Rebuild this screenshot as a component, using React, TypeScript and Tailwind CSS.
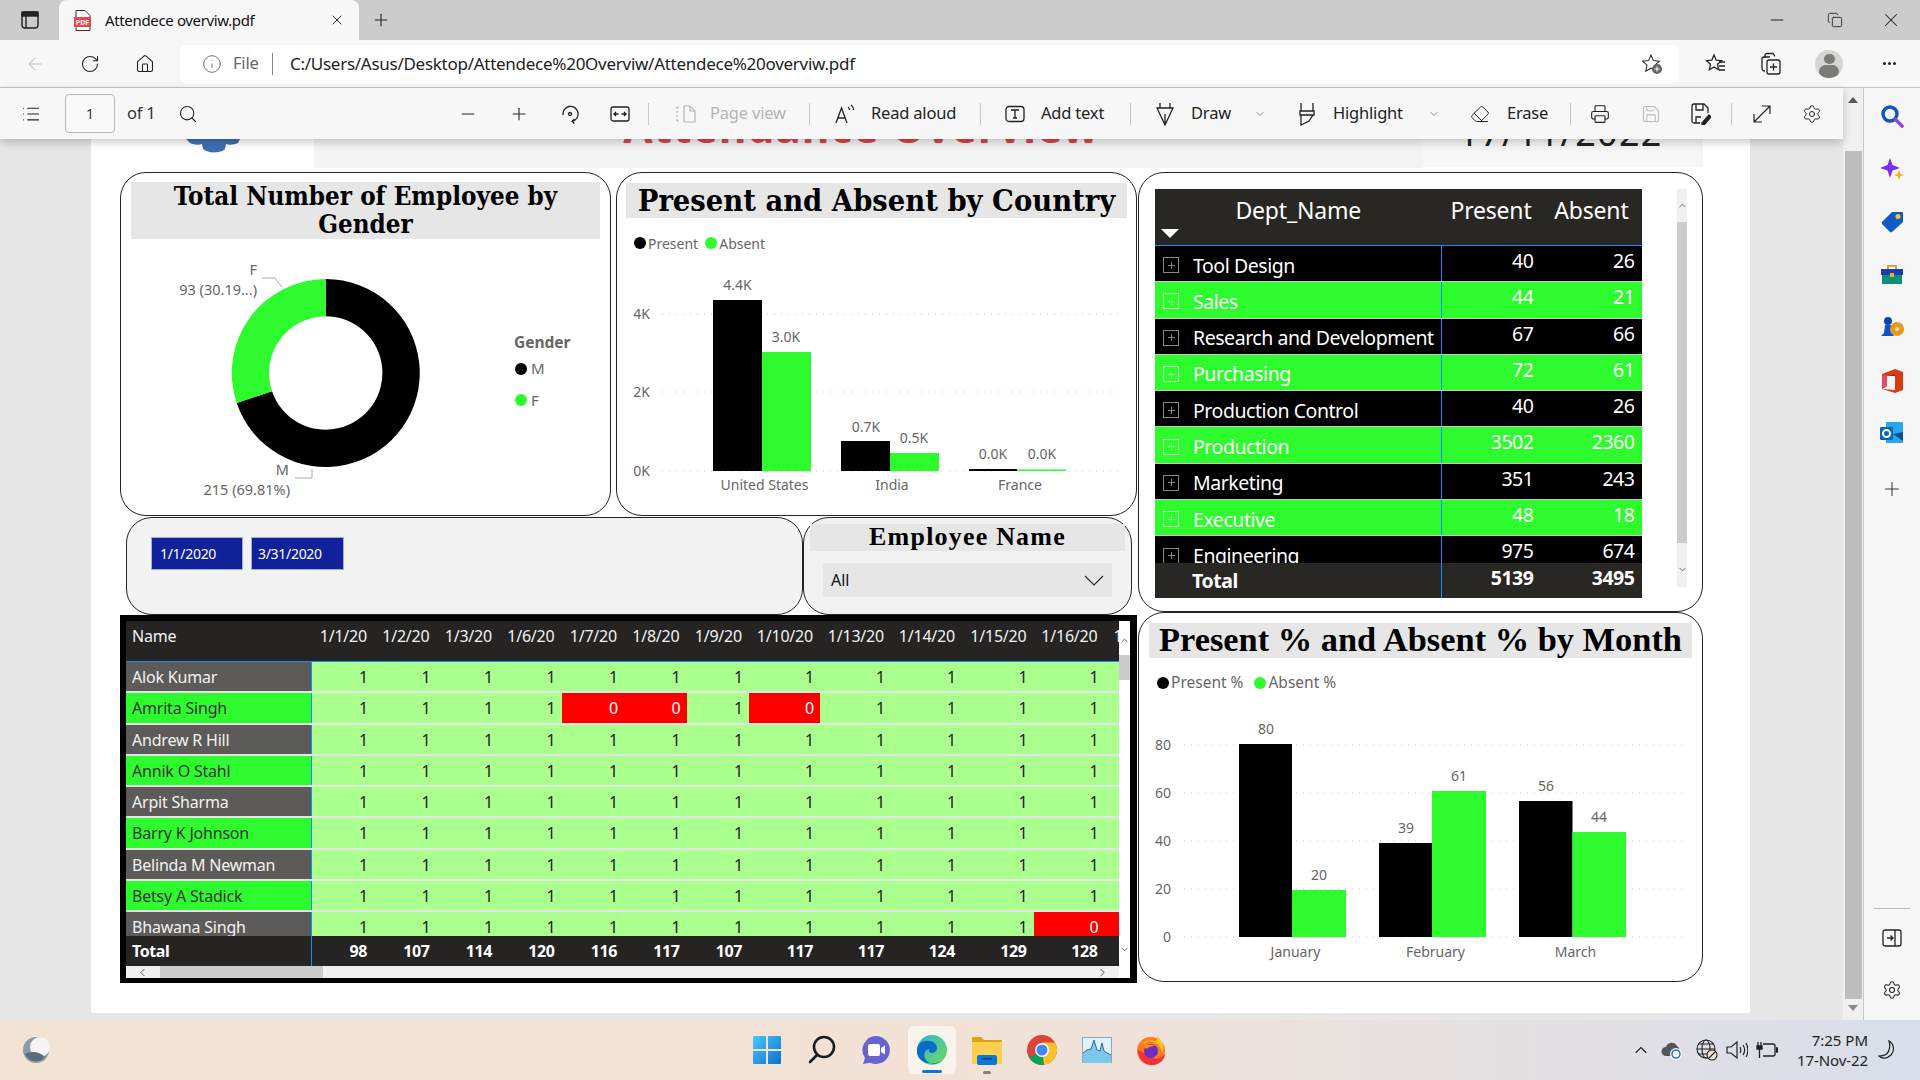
import React from "react";
import {
  ArrowLeft,
  ChevronDown,
  ChevronLeft,
  ChevronRight,
  ChevronUp,
  Copy,
  Eraser,
  Home,
  Info,
  List,
  Minus,
  Plus,
  Printer,
  RotateCw,
  Save,
  Search,
  Settings,
  X,
} from "lucide-react";

const GREEN = "#2dfb2d";

const depts = [
  ["Tool Design", "40", "26"],
  ["Sales", "44", "21"],
  ["Research and Development", "67", "66"],
  ["Purchasing", "72", "61"],
  ["Production Control", "40", "26"],
  ["Production", "3502", "2360"],
  ["Marketing", "351", "243"],
  ["Executive", "48", "18"],
  ["Engineering", "975", "674"],
];

const colWidths = [
  "w-[62.5px]",
  "w-[62.5px]",
  "w-[62.5px]",
  "w-[62.5px]",
  "w-[62.5px]",
  "w-[62.5px]",
  "w-[62.5px]",
  "w-[71px]",
  "w-[71px]",
  "w-[71px]",
  "w-[71.5px]",
  "w-[71px]",
];

const dates = ["1/1/20", "1/2/20", "1/3/20", "1/6/20", "1/7/20", "1/8/20", "1/9/20", "1/10/20", "1/13/20", "1/14/20", "1/15/20", "1/16/20"];
const totals = ["98", "107", "114", "120", "116", "117", "107", "117", "117", "124", "129", "128"];

const people: [string, number[]][] = [
  ["Alok Kumar", []],
  ["Amrita Singh", [4, 5, 7]],
  ["Andrew R Hill", []],
  ["Annik O Stahl", []],
  ["Arpit Sharma", []],
  ["Barry K Johnson", []],
  ["Belinda M Newman", []],
  ["Betsy A Stadick", []],
  ["Bhawana Singh", [11]],
];

const Divider = ({ className = "" }: { className?: string }) => (
  <div className={`w-px h-[22px] bg-[#c8c8c8] shrink-0 ${className}`} />
);

const ToolText = ({ className, muted, children }: { className: string; muted?: boolean; children: React.ReactNode }) => (
  <span className={`shrink-0 whitespace-nowrap text-[16.5px] tracking-[-0.2px] ${muted ? "text-[#b5b5b5]" : "text-[#222]"} ${className}`}>
    {children}
  </span>
);

const TabStrip = () => (
  <div className="h-10 bg-[#cccccc] flex items-end shrink-0">
    <div className="ml-5 mb-[10px] w-5 h-5 flex items-center justify-center">
      <svg width="18" height="18" viewBox="0 0 18 18" fill="none" stroke="#222" strokeWidth="1.4">
        <rect x="1" y="1" width="16" height="16" rx="3" />
        <rect x="1" y="1" width="16" height="4" fill="#222" />
        <path d="M5 5v12" />
      </svg>
    </div>
    <div className="ml-[19px] w-[300px] h-10 bg-[#f7f7f7] rounded-t-lg flex items-center">
      <svg className="ml-[14px]" width="19" height="21" viewBox="0 0 19 21">
        <path d="M3 .5h9l5 5v15H3z" fill="#fff" stroke="#333" />
        <rect x="1" y="7" width="17" height="10" fill="#f0444a" />
        <text x="9.5" y="15" textAnchor="middle" fontSize="7" fontWeight="700" fill="#fff">PDF</text>
      </svg>
      <span className="ml-[13px] w-[224px] text-[15px] tracking-[-0.35px] text-[#111] whitespace-nowrap">Attendece overviw.pdf</span>
      <X size={16} strokeWidth={1.4} className="text-[#222]" />
    </div>
    <Plus size={20} strokeWidth={1.3} className="ml-3 mb-[10px] text-[#222]" />
    <div className="flex-1" />
    <Minus size={20} strokeWidth={1.3} className="mb-[10px] text-[#222]" />
    <Copy size={16} strokeWidth={1.3} className="ml-10 mb-3 text-[#222]" />
    <X size={22} strokeWidth={1.1} className="ml-[37px] mr-[18px] mb-[9px] text-[#222]" />
  </div>
);

const AddressBar = () => (
  <div className="h-12 bg-[#f7f7f7] flex items-center shrink-0 border-b border-[#c6c6c6]">
    <ArrowLeft size={20} strokeWidth={1.2} className="ml-[25px] text-[#b9b9b9]" />
    <RotateCw size={20} strokeWidth={1.3} className="ml-[35px] text-[#222]" />
    <Home size={20} strokeWidth={1.3} className="ml-[35px] text-[#222]" />
    <div className="ml-[25px] w-[1499px] h-[38px] bg-white rounded-md flex items-center">
      <Info size={20} strokeWidth={1.1} className="ml-[22px] text-[#666]" />
      <span className="ml-[11px] w-[29px] text-[16.5px] text-[#666] tracking-[-0.2px]">File</span>
      <div className="ml-[10px] w-px h-[22px] bg-[#888]" />
      <span className="ml-[17px] text-[17px] tracking-[-0.27px] text-[#222] whitespace-nowrap">
        C:/Users/Asus/Desktop/Attendece%20Overviw/Attendece%20overviw.pdf
      </span>
      <div className="flex-1" />
      <svg className="mr-[16px]" width="22" height="22" viewBox="0 0 22 22" fill="none" stroke="#333" strokeWidth="1.1">
        <path d="M10 2l2.5 5.6 5.9.6-4.4 4 1.2 5.9L10 15.2l-5.2 2.9L6 12.2l-4.4-4 5.9-.6z" />
        <circle cx="16" cy="16" r="5" fill="#666" stroke="none" />
        <path d="M16 13.5v5M13.5 16h5" stroke="#fff" />
      </svg>
    </div>
    <svg className="ml-[26px]" width="22" height="22" viewBox="0 0 22 22" fill="none" stroke="#222" strokeWidth="1.3">
      <path d="M9 2l2.2 5.2 5.3.5-4 3.6 1.2 5.4L9 13.9l-4.700 2.800 1.200-5.400-4-3.600 5.300-.5z" />
      <path d="M14 9h6M14 13h6M14 17h6" />
    </svg>
    <svg className="ml-[33px]" width="22" height="24" viewBox="0 0 22 24" fill="none" stroke="#222" strokeWidth="1.3">
      <path d="M5 5.500V3.500a2 2 0 0 1 2-2h6l2 3" />
      <path d="M5 19c-2 0-3-1-3-3V7a2 2 0 0 1 2-2h6" />
      <rect x="7" y="8" width="13" height="14" rx="2" />
      <path d="M13.500 11.500v7M10 15h7" />
    </svg>
    <div className="ml-[33px] w-[28px] h-[28px] rounded-full bg-[#d5d5d2] overflow-hidden flex flex-col items-center">
      <div className="mt-[4px] w-[11px] h-[12px] rounded-full bg-[#7b7b79]" />
      <div className="mt-[1px] w-[20px] h-[14px] rounded-full bg-[#7b7b79]" />
    </div>
    <div className="ml-[40px] flex gap-[2px]">
      <div className="w-[3px] h-[3px] rounded-full bg-[#222]" />
      <div className="w-[3px] h-[3px] rounded-full bg-[#222]" />
      <div className="w-[3px] h-[3px] rounded-full bg-[#222]" />
    </div>
  </div>
);

const PdfToolbar = () => (
  <div className="relative z-10 h-[51px] bg-[#f7f7f7] flex items-center shrink-0 shadow-[0_3px_9px_rgba(0,0,0,0.22)]">
    <List size={20} strokeWidth={1.3} className="ml-[21px] shrink-0 text-[#222]" />
    <div className="ml-[24px] w-[50px] h-[39px] shrink-0 border border-[#b8b8b8] rounded-sm bg-[#f9f9f9] flex items-center justify-center text-[14px] text-[#333]">1</div>
    <ToolText className="ml-[12px] w-[25px] text-[#333]">of 1</ToolText>
    <Search size={20} strokeWidth={1.3} className="ml-[26px] shrink-0 text-[#222]" />
    <Minus size={20} strokeWidth={1.3} className="ml-[260px] shrink-0 text-[#222]" />
    <Plus size={20} strokeWidth={1.3} className="ml-[31px] shrink-0 text-[#222]" />
    <svg className="ml-[31px] shrink-0" width="20" height="20" viewBox="0 0 20 20" fill="none" stroke="#222" strokeWidth="1.3">
      <path d="M3 11a7.500 7.500 0 0 1 6-8.500 7.500 7.500 0 1 1 3 15" />
      <path d="M14.500 15l-2.500 2.500 2.500 2" />
      <circle cx="10" cy="10" r="1.500" />
    </svg>
    <svg className="ml-[30px] shrink-0" width="20" height="20" viewBox="0 0 20 20" fill="none" stroke="#222" strokeWidth="1.3">
      <rect x="1" y="3" width="18" height="14" rx="2" />
      <path d="M4.500 10h4M11.500 10h4M6 8l-2 2 2 2M14 8l2 2-2 2" />
    </svg>
    <Divider className="ml-[18px]" />
    <svg className="ml-[27px] shrink-0" width="20" height="20" viewBox="0 0 20 20" fill="none" stroke="#b5b5b5" strokeWidth="1.2">
      <path d="M1 3h4M1 17h4M1 3v14" strokeDasharray="2 2" />
      <path d="M8 2h6l5 5v11H8z" />
      <path d="M14 2v5h5" />
    </svg>
    <ToolText muted className="ml-[14px] w-[76px]">Page view</ToolText>
    <Divider className="ml-[23px]" />
    <svg className="ml-[25px] shrink-0" width="20" height="20" viewBox="0 0 20 20" fill="none" stroke="#222" strokeWidth="1.3">
      <path d="M1 19L6.500 4 12 19M3 14h7" />
      <path d="M13 3c1 .7 1.500 1.700 1.500 3M16 1c1.500 1.200 2.500 3 2.500 5" />
    </svg>
    <ToolText className="ml-[16px] w-[86px]">Read aloud</ToolText>
    <Divider className="ml-[23px]" />
    <svg className="ml-[24px] shrink-0" width="20" height="20" viewBox="0 0 20 20" fill="none" stroke="#222" strokeWidth="1.3">
      <rect x="1" y="2.500" width="18" height="15" rx="3" />
      <path d="M6 6h8M10 6v8M8 14h4" />
    </svg>
    <ToolText className="ml-[16px] w-[65px]">Add text</ToolText>
    <Divider className="ml-[24px]" />
    <svg className="ml-[24px] shrink-0" width="20" height="24" viewBox="0 0 20 24" fill="none" stroke="#222" strokeWidth="1.3">
      <path d="M2 6h16l-8 17zM5 6V1M15 6V1M10 12v10" />
    </svg>
    <ToolText className="ml-[16px] w-[39px]">Draw</ToolText>
    <ChevronDown size={12} strokeWidth={1.2} className="ml-[24px] shrink-0 text-[#444]" />
    <svg className="ml-[31px] shrink-0" width="20" height="24" viewBox="0 0 20 24" fill="none" stroke="#222" strokeWidth="1.3">
      <path d="M4 1v8h12V1M3 9h14v4H3zM4 13v10l8-4 4-6" />
    </svg>
    <ToolText className="ml-[16px] w-[71px]">Highlight</ToolText>
    <ChevronDown size={12} strokeWidth={1.2} className="ml-[24px] shrink-0 text-[#444]" />
    <Eraser size={20} strokeWidth={1.2} className="ml-[30px] shrink-0 text-[#222]" />
    <ToolText className="ml-[17px] w-[40px]">Erase</ToolText>
    <Divider className="ml-[23px]" />
    <Printer size={20} strokeWidth={1.3} className="ml-[19px] shrink-0 text-[#222]" />
    <Save size={20} strokeWidth={1.3} className="ml-[31px] shrink-0 text-[#bbb]" />
    <svg className="ml-[30px] shrink-0" width="20" height="22" viewBox="0 0 20 22" fill="none" stroke="#222" strokeWidth="1.3">
      <path d="M9 20H3a2 2 0 0 1-2-2V3a2 2 0 0 1 2-2h10l4 4v5" />
      <path d="M5 1v6h7V1M5 20v-6h5" />
      <path d="M11 20l7-8 2 2-7 8h-2z" fill="#222" />
    </svg>
    <Divider className="ml-[20px]" />
    <svg className="ml-[20px] shrink-0" width="20" height="20" viewBox="0 0 20 20" fill="none" stroke="#222" strokeWidth="1.2">
      <path d="M2 18L18 2M10 2h8v8M2 10v8h8" />
    </svg>
    <Settings size={20} strokeWidth={1.2} className="ml-[30px] shrink-0 text-[#222]" />
  </div>
);

const ChartTitle = ({ className, children }: { className: string; children: React.ReactNode }) => (
  <div className={`bg-[#e6e6e6] text-center font-bold text-black ${className}`}>{children}</div>
);

const GenderPanel = () => (
  <div className="w-[491px] h-[344px] shrink-0 border border-[#252423] rounded-[26px] overflow-hidden bg-white">
    <ChartTitle className="mt-[9px] mx-[10px] h-[57px] text-[25.8px] leading-[28px] font-['DejaVu_Serif_Condensed','Liberation_Serif',serif]">Total Number of Employee by Gender</ChartTitle>
    <svg width="489" height="276" viewBox="121 239 489 276" className="block">
      <path d="M325.7 279A94 94 0 1 1 236.7 403.1L272 391.2A56.7 56.7 0 1 0 325.7 316.3Z" fill="#000" />
      <path d="M325.7 279A94 94 0 0 0 236.7 403.1L272 391.2A56.7 56.7 0 0 1 325.7 316.3Z" fill={GREEN} />
      <path d="M262 278h13l7 9M295 478h17v-9" fill="none" stroke="#aaa" />
      <g fontSize="14.5" fill="#666">
        <text x="257" y="275" textAnchor="end">F</text>
        <text x="257" y="295" textAnchor="end">93 (30.19...)</text>
        <text x="289" y="475" textAnchor="end">M</text>
        <text x="290" y="495" textAnchor="end">215 (69.81%)</text>
        <text x="514" y="348" fontWeight="700" fontSize="15.5">Gender</text>
        <text x="531" y="374" fontSize="15">M</text>
        <text x="531" y="406" fontSize="15">F</text>
      </g>
      <circle cx="521" cy="369" r="6" fill="#000" />
      <circle cx="521" cy="400" r="6" fill={GREEN} />
    </svg>
  </div>
);

const ChartLegend = ({ className, gap, items }: { className: string; gap: string; items: string[] }) => (
  <div className={`flex items-center text-[#666] ${className}`}>
    {items.map((item, i) => (
      <div key={item} className={`flex items-center gap-[2px] ${i === 1 ? gap : ""}`}>
        <span className={`w-3 h-3 rounded-full ${i === 0 ? "bg-black" : "bg-[#2dfb2d]"}`} />
        <span>{item}</span>
      </div>
    ))}
  </div>
);

const Grid = ({ x1, x2, ys }: { x1: number; x2: number; ys: number[] }) => (
  <g stroke="#c9c9c9" strokeDasharray="1 6">
    {ys.map((y) => (
      <line key={y} x1={x1} x2={x2} y1={y} y2={y} />
    ))}
  </g>
);

const CountryPanel = () => (
  <div className="w-[521px] h-[344px] shrink-0 border border-[#252423] rounded-[26px] overflow-hidden bg-white">
    <ChartTitle className="mt-[10px] mx-[9px] h-[35px] text-[30.5px] leading-[35px] font-['DejaVu_Serif_Condensed','Liberation_Serif',serif]">Present and Absent by Country</ChartTitle>
    <ChartLegend className="mt-[16px] ml-[17px] h-[18px] text-[14px]" gap="ml-[7px]" items={["Present", "Absent"]} />
    <svg width="519" height="232" viewBox="617 268 519 232" className="block mt-[16px]">
      <Grid x1={662} x2={1122} ys={[314, 392, 471]} />
      <rect x="713" y="300" width="49" height="171" fill="#000" />
      <rect x="762" y="352" width="49" height="119" fill={GREEN} />
      <rect x="841" y="441" width="49" height="30" fill="#000" />
      <rect x="890" y="453" width="49" height="18" fill={GREEN} />
      <rect x="969" y="469" width="48" height="2" fill="#000" />
      <rect x="1017" y="469.5" width="49" height="1.5" fill={GREEN} />
      <g fontSize="14" fill="#666" textAnchor="middle">
        <text x="737.5" y="290">4.4K</text>
        <text x="786" y="342">3.0K</text>
        <text x="866" y="432">0.7K</text>
        <text x="914" y="443">0.5K</text>
        <text x="993" y="459">0.0K</text>
        <text x="1042" y="459">0.0K</text>
        <text x="764.5" y="490">United States</text>
        <text x="892" y="490">India</text>
        <text x="1020" y="490">France</text>
      </g>
      <g fontSize="14" fill="#666" textAnchor="end">
        <text x="650" y="319">4K</text>
        <text x="650" y="397">2K</text>
        <text x="650" y="476">0K</text>
      </g>
    </svg>
  </div>
);

const DatePanel = () => (
  <div className="w-[677px] h-[98px] shrink-0 border border-[#252423] rounded-[26px] bg-[#f2f2f2] flex items-start gap-2 pl-[24px] pt-[19px]">
    <div className="w-[92px] h-[33px] bg-[#10219a] border border-[#9fb0d8] flex items-center pl-[8px] text-[14px] tracking-[-0.3px] text-white">1/1/2020</div>
    <div className="w-[93px] h-[33px] bg-[#10219a] border border-[#9fb0d8] flex items-center pl-[6px] text-[14px] tracking-[-0.3px] text-white">3/31/2020</div>
  </div>
);

const EmployeeSlicer = () => (
  <div className="w-[329px] h-[98px] shrink-0 border border-[#252423] rounded-[26px] bg-[#f2f2f2] px-[6px] pt-[6px]">
    <ChartTitle className="h-[27px] text-[26px] leading-[26px] tracking-[1.2px] font-['Liberation_Serif',serif]">Employee Name</ChartTitle>
    <div className="mt-[12px] mx-[13px] h-[34px] bg-[#e6e6e6] flex items-center justify-between pl-[8px] pr-[8px] text-[16px] text-[#111]">
      <span>All</span>
      <svg width="20" height="11" viewBox="0 0 20 11" fill="none" stroke="#222" strokeWidth="1.1">
        <path d="M1 1l9 9 9-9" />
      </svg>
    </div>
  </div>
);

const Matrix = () => (
  <div className="relative w-[1017px] h-[368px] shrink-0 bg-black pl-[6px] pt-[6px]">
    <div className="w-[992.5px] h-[40px] bg-[#252423] flex text-[16px] tracking-[-0.2px] text-[#f2f2f2] overflow-hidden">
      <div className="w-[185.5px] shrink-0 pl-[6px] pt-[3px]">Name</div>
      {dates.map((d, i) => (
        <div key={d} className={`${colWidths[i]} shrink-0 text-right pr-[7px] pt-[3px] whitespace-nowrap`}>{d}</div>
      ))}
      <div className="shrink-0 pl-[9px] pt-[3px]">1</div>
    </div>
    <div className="h-[275px] w-[992.5px] overflow-hidden border-t border-[#118dff]">
      {people.map(([name, zeros], r) => (
        <div key={name} className="h-[31.25px] flex border-b-2 border-[#e4e4e4] text-[16px] tracking-[-0.2px]">
          <div className={`w-[185.5px] shrink-0 pl-[6px] pt-px flex items-center border-r border-[#118dff] ${r % 2 ? "bg-[#2dfb2d] text-[#333]" : "bg-[#5d5b59] text-[#f2f2f2]"}`}>{name}</div>
          {colWidths.map((w, c) => (
            <div key={c} className={`${w} shrink-0 flex items-center justify-end pt-px pr-[6px] ${zeros.includes(c) ? "bg-[#ff0000] text-white" : "bg-[#aaff8e] text-[#222]"}`}>
              {zeros.includes(c) ? 0 : 1}
            </div>
          ))}
          <div className={`flex-1 ${zeros.includes(11) ? "bg-[#ff0000]" : "bg-[#aaff8e]"}`} />
        </div>
      ))}
    </div>
    <div className="w-[992.5px] h-[30px] bg-[#252423] flex items-center font-bold text-[16px] tracking-[-0.4px] text-white">
      <div className="w-[185.5px] h-full shrink-0 pl-[6px] flex items-center border-r border-[#118dff]">Total</div>
      {totals.map((t, i) => (
        <div key={i} className={`${colWidths[i]} shrink-0 text-right pr-[7px]`}>{t}</div>
      ))}
    </div>
    <div className="w-[992.5px] h-3 bg-[#f0f0f0] flex items-center">
      <ChevronLeft size={13} strokeWidth={1.5} className="ml-[10px] text-[#333]" />
      <div className="ml-[11px] w-[163px] h-3 bg-[#cccccc]" />
      <div className="flex-1" />
      <ChevronRight size={13} strokeWidth={1.5} className="mr-[10px] text-[#333]" />
    </div>
    <div className="absolute left-[998.5px] top-[6px] w-[11.5px] h-[357px] bg-white flex flex-col items-center">
      <ChevronUp size={11} strokeWidth={1.5} className="mt-[14px] text-[#333]" />
      <div className="mt-[9px] w-full h-[25px] bg-[#cccccc]" />
      <div className="flex-1" />
      <ChevronDown size={11} strokeWidth={1.5} className="mb-[23px] text-[#333]" />
    </div>
  </div>
);

const DeptTable = () => (
  <div className="w-[565px] h-[440px] shrink-0 border border-[#252423] rounded-[26px] bg-white flex pl-[16px] pt-[16px]">
    <div className="w-[487px] h-[409px] shrink-0 text-white">
      <div className="h-[57px] bg-[#292724] border-b border-[#118dff] relative text-[23px] tracking-[-0.2px] flex">
        <div className="w-[286.5px] text-center pt-[4px]">Dept_Name</div>
        <div className="w-[98px] text-right pt-[4px] pr-[8px]">Present</div>
        <div className="w-[102px] text-right pt-[4px] pr-[13px] whitespace-nowrap">Absent</div>
        <div className="absolute left-[6px] top-[40px] w-0 h-0 border-x-[9px] border-x-transparent border-t-[9px] border-t-white" />
      </div>
      <div className="h-[317px] overflow-hidden">
        {depts.map(([name, p, a], i) => (
          <div key={name} className={`h-[36.3px] flex border-b border-[#c8c8c8] text-[19.5px] tracking-[-0.45px] ${i % 2 ? "bg-[#2dfb2d]" : "bg-black"}`}>
            <div className="w-[286.5px] shrink-0 border-r border-[#118dff] flex items-center pl-[8px] pt-[3px]">
              <span className={`w-4 h-4 border flex items-center justify-center ${i % 2 ? "border-[#b4ffb4] text-[#b4ffb4]" : "border-[#888] text-[#bbb]"}`}>
                <Plus size={11} strokeWidth={1.5} />
              </span>
              <span className="ml-[14px] whitespace-nowrap">{name}</span>
            </div>
            <div className="w-[92px] shrink-0 text-right leading-[30px]">{p}</div>
            <div className="w-[101px] shrink-0 text-right leading-[30px]">{a}</div>
          </div>
        ))}
      </div>
      <div className="h-[35px] bg-[#292724] flex font-bold text-[19.5px] tracking-[-0.45px]">
        <div className="w-[286.5px] shrink-0 border-r border-[#118dff] pl-[37px] pt-[3px]">Total</div>
        <div className="w-[92px] shrink-0 text-right">5139</div>
        <div className="w-[101px] shrink-0 text-right">3495</div>
      </div>
    </div>
    <div className="ml-[35px] w-[10px] h-[398px] bg-[#f0f0f0] flex flex-col items-center">
      <ChevronUp size={11} strokeWidth={1.5} className="mt-[11px] text-[#333]" />
      <div className="mt-[11px] w-full h-[321px] bg-[#cccccc]" />
      <ChevronDown size={11} strokeWidth={1.5} className="mt-[21px] text-[#333]" />
    </div>
  </div>
);

const MonthPanel = () => (
  <div className="w-[565px] h-[370px] shrink-0 border border-[#252423] rounded-[26px] overflow-hidden bg-white">
    <ChartTitle className="mt-[10px] mx-[10px] h-[35px] text-[34.4px] leading-[33px] font-['Liberation_Serif',serif]">Present % and Absent % by Month</ChartTitle>
    <ChartLegend className="mt-[16px] ml-[18px] h-[18px] text-[15.5px]" gap="ml-[11px]" items={["Present %", "Absent %"]} />
    <svg width="563" height="287" viewBox="1139 695 563 287" className="block mt-[3px]">
      <Grid x1={1184} x2={1688} ys={[745, 793, 841, 889, 937]} />
      <rect x="1239" y="744" width="53" height="193" fill="#000" />
      <rect x="1292" y="890" width="54" height="47" fill={GREEN} />
      <rect x="1379" y="843" width="53" height="94" fill="#000" />
      <rect x="1432" y="791" width="54" height="146" fill={GREEN} />
      <rect x="1519" y="801" width="53.5" height="136" fill="#000" />
      <rect x="1572.5" y="832" width="53.5" height="105" fill={GREEN} />
      <g fontSize="14" fill="#666" textAnchor="middle">
        <text x="1266" y="734">80</text>
        <text x="1319" y="880">20</text>
        <text x="1406" y="833">39</text>
        <text x="1459" y="781">61</text>
        <text x="1546" y="791">56</text>
        <text x="1599" y="822">44</text>
        <text x="1295.5" y="957">January</text>
        <text x="1435.5" y="957">February</text>
        <text x="1575.5" y="957">March</text>
      </g>
      <g fontSize="14" fill="#666" textAnchor="end">
        <text x="1171" y="750">80</text>
        <text x="1171" y="798">60</text>
        <text x="1171" y="846">40</text>
        <text x="1171" y="894">20</text>
        <text x="1171" y="942">0</text>
      </g>
    </svg>
  </div>
);

const PdfPage = () => (
  <div className="ml-[91px] w-[1659px] h-[874px] bg-white overflow-hidden pl-[29px]">
    <div className="-ml-[29px] h-[33px] flex overflow-hidden">
      <div className="w-[223px] shrink-0 flex justify-center pl-[20px]">
        <svg width="56" height="14" viewBox="0 0 56 14">
          <path d="M1 0h54l-2 4c-4 2-9 2-12 1l-1 5c-3 4-17 5-22 0l-1-5c-3 1-8 1-12-1z" fill="#3f6fb0" />
        </svg>
      </div>
      <div className="w-[1108px] h-[29px] shrink-0 bg-[#f3f3f3] overflow-hidden text-center pr-[13px]">
        <div className="-mt-[37px] font-bold text-[42.5px] leading-[50px] tracking-[1px] text-[#e0434a]">Attendance Overview</div>
      </div>
      <div className="w-[281px] h-[28px] shrink-0 bg-[#f6f6f6] overflow-hidden text-center">
        <div className="-mt-[26px] pr-[4px] text-[36px] leading-[40px] tracking-[1.3px] text-[#222]">17/11/2022</div>
      </div>
    </div>
    <div className="flex w-[1583px]">
      <div className="w-[1018px] shrink-0">
        <div className="flex gap-[5px]">
          <GenderPanel />
          <CountryPanel />
        </div>
        <div className="flex ml-[6px] mt-px">
          <DatePanel />
          <EmployeeSlicer />
        </div>
        <Matrix />
      </div>
      <div className="w-[565px] shrink-0">
        <DeptTable />
        <MonthPanel />
      </div>
    </div>
  </div>
);

const SideIcons = () => (
  <div className="w-[57px] shrink-0 bg-[#f7f7f7] border-l border-[#c8c8c8] flex flex-col items-center">
    <svg className="mt-[16px]" width="24" height="24" viewBox="0 0 24 24" fill="none">
      <circle cx="10" cy="10" r="7" stroke="#1450c8" strokeWidth="3.4" />
      <path d="M15.500 15.500L22 22" stroke="#9045e0" strokeWidth="3.6" strokeLinecap="round" />
    </svg>
    <svg className="mt-[29px]" width="24" height="24" viewBox="0 0 24 24">
      <path d="M10 1l2.500 7L20 11l-7.500 2.500L10 21l-2.500-7.500L0 11l7.500-3z" fill="#7a2cf0" />
      <path d="M19 13l1.300 3.700L24 18l-3.700 1.300L19 23l-1.300-3.700L14 18l3.700-1.300z" fill="#f5b21a" />
    </svg>
    <svg className="mt-[29px]" width="24" height="24" viewBox="0 0 24 24">
      <path d="M12 2h10a1 1 0 0 1 1 1v9L12 22a2 2 0 0 1-2 0L2 14a2 2 0 0 1 0-2z" fill="#0d5bc6" />
      <circle cx="18" cy="6.500" r="2.500" fill="#f7c52d" />
    </svg>
    <svg className="mt-[29px]" width="24" height="24" viewBox="0 0 24 24" fill="none">
      <path d="M8 6V3h8v3" stroke="#e0a030" strokeWidth="2" />
      <rect x="1" y="6" width="22" height="6" fill="#1540b0" />
      <rect x="2" y="12" width="20" height="9" fill="#0f8f78" />
      <rect x="10" y="10" width="4" height="4" fill="#f2b01e" />
    </svg>
    <svg className="mt-[28px]" width="24" height="24" viewBox="0 0 24 24">
      <circle cx="8" cy="6" r="4" fill="#1540b0" />
      <path d="M5 10h6l1 8 2 3H1l3-3z" fill="#1450c8" />
      <circle cx="17" cy="14" r="7" fill="#e29a1f" />
      <circle cx="17" cy="14" r="2" fill="#fbe3a0" />
    </svg>
    <svg className="mt-[29px]" width="24" height="26" viewBox="0 0 24 26">
      <path d="M15 1l8 3v18l-8 3-13-4 13 1V5L7 8v10l-5 3V6z" fill="#dc3a12" />
      <path d="M7 8l8-3v3z" fill="#b21c24" />
      <path d="M2 6l5 2v10l-5 3z" fill="#e2486a" />
    </svg>
    <svg className="mt-[27px]" width="24" height="24" viewBox="0 0 24 24">
      <rect x="6" y="1" width="17" height="21" rx="1" fill="#28a8ea" />
      <rect x="0" y="6" width="13" height="13" rx="1" fill="#0a65c0" />
      <circle cx="6.500" cy="12.500" r="3.500" fill="none" stroke="#fff" strokeWidth="2" />
      <path d="M13 13l10 7v-9z" fill="#0a4f9a" />
    </svg>
    <Plus size={22} strokeWidth={1.1} className="mt-[33px] text-[#333]" />
    <div className="flex-1" />
    <div className="w-9 h-px bg-[#bbb]" />
    <svg className="mt-[20px]" width="20" height="18" viewBox="0 0 20 18" fill="none" stroke="#222" strokeWidth="1.3">
      <rect x="1" y="1" width="18" height="16" rx="2" />
      <path d="M13 1v16M5 9h6M8.500 6.500L11 9l-2.500 2.500" />
    </svg>
    <Settings size={20} strokeWidth={1.3} className="mt-[33px] mb-[20px] text-[#222]" />
  </div>
);

const Taskbar = () => (
  <div className="h-[60px] shrink-0 bg-linear-to-r from-[#f3e3d4] via-[#f2e2d6] to-[#d9deea] flex items-center">
    <svg className="ml-[22px]" width="28" height="28" viewBox="0 0 28 28">
      <circle cx="14" cy="14" r="13" fill="#8d9aa8" />
      <circle cx="18" cy="11" r="10" fill="#f3f4f6" />
      <path d="M3 18c6-3 14-3 20 3-6 7-16 5-20-3z" fill="#5d6b78" />
    </svg>
    <div className="ml-[702px]">
      <svg width="30" height="30" viewBox="0 0 30 30">
        <defs>
          <linearGradient id="win" x1="0" y1="0" x2="1" y2="1">
            <stop offset="0" stopColor="#4cc6fb" />
            <stop offset="1" stopColor="#0a70cf" />
          </linearGradient>
        </defs>
        <path d="M1 2a1 1 0 0 1 1-1h12v13H1zM16 1h12a1 1 0 0 1 1 1v12H16zM1 16h13v13H2a1 1 0 0 1-1-1zM16 16h13v12a1 1 0 0 1-1 1H16z" fill="url(#win)" />
      </svg>
    </div>
    <svg className="ml-[26px]" width="28" height="30" viewBox="0 0 28 30" fill="none" stroke="#1c1c1c" strokeWidth="2.6">
      <circle cx="16" cy="12" r="10" />
      <path d="M9 20l-7 7" strokeLinecap="round" />
    </svg>
    <svg className="ml-[25px]" width="30" height="30" viewBox="0 0 30 30">
      <path d="M15 1a14 14 0 1 1-6 26.700L2 29l2-6A14 14 0 0 1 15 1z" fill="#6764d0" />
      <rect x="7" y="9" width="12" height="12" rx="2" fill="#fff" />
      <path d="M20 13l4-2.500v9L20 17z" fill="#fff" />
    </svg>
    <div className="relative ml-[17px] w-12 h-12 rounded-md bg-[#faf2ec] flex items-center justify-center">
      <svg width="32" height="32" viewBox="0 0 32 32">
        <defs>
          <linearGradient id="edge" x1="0" y1="0" x2="1" y2="1">
            <stop offset="0" stopColor="#2ab6d6" />
            <stop offset="1" stopColor="#6fdc5a" />
          </linearGradient>
        </defs>
        <circle cx="16" cy="16" r="15" fill="url(#edge)" />
        <path d="M1 17C1 8 8 6 14 7c7 1 9 8 5 11-3 2-7 1-6-3-5 1-7 8-1 13 4 3 11 2 15-2-5 5-26 6-26-9z" fill="#0c6cc5" />
      </svg>
      <div className="absolute left-[14px] bottom-[1px] w-5 h-[3px] rounded-full bg-[#0a78d4]" />
    </div>
    <div className="relative ml-[16px] w-[30px] h-[30px]">
      <svg width="30" height="30" viewBox="0 0 30 30">
        <path d="M0 3a1 1 0 0 1 1-1h8l3 3h17a1 1 0 0 1 1 1v4H0z" fill="#e0a010" />
        <path d="M0 7h30v22H0z" fill="#fdd04f" />
        <rect x="5" y="20" width="20" height="10" rx="2" fill="#0a78d4" />
        <rect x="10" y="23" width="10" height="1.500" fill="#0a3f80" />
      </svg>
      <div className="absolute left-[11px] -bottom-[9px] w-2 h-[3px] rounded-full bg-[#8a8079]" />
    </div>
    <svg className="ml-[25px]" width="30" height="30" viewBox="0 0 30 30">
      <circle cx="15" cy="15" r="15" fill="#db4437" />
      <path d="M15 15L2 22.500A15 15 0 0 0 17 29.900z" fill="#0f9d58" />
      <path d="M15 15l2 14.900A15 15 0 0 0 28 7.500H15z" fill="#fbc02d" />
      <circle cx="15" cy="15" r="7" fill="#fff" />
      <circle cx="15" cy="15" r="5.500" fill="#4285f4" />
    </svg>
    <svg className="ml-[25px]" width="30" height="26" viewBox="0 0 30 26">
      <rect x=".5" y=".5" width="29" height="25" fill="#dff2fb" stroke="#9aa5ad" />
      <path d="M1 16l4-3 4-1 3-9 3 10 3 1 2-8 2 8 3 2 4 2v8H1z" fill="#7cc7ea" />
      <path d="M1 16l4-3 4-1 3-9 3 10 3 1 2-8 2 8 3 2 4 2" fill="none" stroke="#2a6f9d" />
    </svg>
    <svg className="ml-[24px]" width="30" height="30" viewBox="0 0 30 30">
      <circle cx="15" cy="16" r="14" fill="#ff7a1f" />
      <path d="M4 6c2 0 3 2 4 3 3-3 7-3 9-2 6 2 9 7 9 12 3-6 1-14-5-18 1 4-1 5-3 5-5-1-9 0-11 2z" fill="#ffc51f" />
      <path d="M2 15C2 24 9 30 16 30c8 0 13-6 13-11-3 4-8 6-12 4-5-2-8-5-15-8z" fill="#f0303a" />
      <circle cx="15" cy="16" r="7" fill="#6a2fc0" />
      <path d="M8 12c3-3 8-3 11-1-3 0-7 1-8 3z" fill="#ff8a1f" />
    </svg>
    <div className="flex-1" />
    <ChevronUp size={20} strokeWidth={1.3} className="text-[#222]" />
    <svg className="ml-[10px]" width="22" height="22" viewBox="0 0 22 22">
      <path d="M5 17a4.500 4.500 0 0 1 0-9 6 6 0 0 1 11-1 5 5 0 0 1 2 6v4z" fill="#555" />
      <circle cx="15" cy="15" r="6" fill="#fff" />
      <circle cx="15" cy="15" r="4" fill="none" stroke="#1a78d2" strokeWidth="1.600" />
    </svg>
    <svg className="ml-[13px]" width="22" height="22" viewBox="0 0 22 22" fill="none" stroke="#222" strokeWidth="1.100">
      <circle cx="10" cy="10" r="9" />
      <ellipse cx="10" cy="10" rx="4" ry="9" />
      <path d="M1 10h18M2 5h16M2 15h10" />
      <circle cx="16" cy="16" r="5" fill="#f2e2d8" />
      <path d="M13 19l6-6" />
    </svg>
    <svg className="ml-[8px]" width="22" height="22" viewBox="0 0 22 22" fill="none" stroke="#222" strokeWidth="1.200">
      <path d="M1 8h4l6-5v16l-6-5H1z" />
      <path d="M14 8c1 2 1 4 0 6M17 6c2 3 2 7 0 10M20 4c2.500 4 2.500 10 0 14" />
    </svg>
    <svg className="ml-[8px]" width="22" height="18" viewBox="0 0 22 18" fill="none" stroke="#222" strokeWidth="1.300">
      <path d="M7 3h10a2 2 0 0 1 2 2v8a2 2 0 0 1-2 2H7" />
      <path d="M20 7h2v4h-2" fill="#222" />
      <path d="M2 1v4M5 1v4M1 5h5v3H1zM3.500 8v9" fill="#222" />
    </svg>
    <div className="ml-[10px] w-[80px] text-right text-[15px] leading-5 text-[#222]">
      <div>7:25 PM</div>
      <div className="whitespace-nowrap tracking-[-0.1px]">17-Nov-22</div>
    </div>
    <svg className="ml-[10px] mr-[24px]" width="18" height="20" viewBox="0 0 18 20" fill="none" stroke="#222" strokeWidth="1.200">
      <path d="M11 1c5 3 6 10 2 14s-9 4-12 1c5 0 9-2 10-6 1-3 1-6 0-9z" />
    </svg>
  </div>
);

export default function App() {
  return (
    <div className="w-[1920px] h-[1080px] overflow-hidden flex flex-col font-['Noto_Sans',sans-serif] bg-[#e6e6e6]">
      <TabStrip />
      <AddressBar />
      <div className="flex-1 min-h-0 flex">
        <div className="w-[1843px] shrink-0 flex flex-col min-h-0">
          <PdfToolbar />
          <div className="flex-1 min-h-0 bg-[#e6e6e6]">
            <PdfPage />
          </div>
        </div>
        <div className="w-[20px] shrink-0 bg-[#f0f0f0] flex flex-col items-center">
          <div className="mt-[9px] w-0 h-0 border-x-[5px] border-x-transparent border-b-[6px] border-b-[#555]" />
          <div className="mt-[48px] w-[17px] h-[848px] bg-[#bdbdbd]" />
          <div className="mt-[6px] w-0 h-0 border-x-[5px] border-x-transparent border-t-[6px] border-t-[#888]" />
        </div>
        <SideIcons />
      </div>
      <Taskbar />
    </div>
  );
}
